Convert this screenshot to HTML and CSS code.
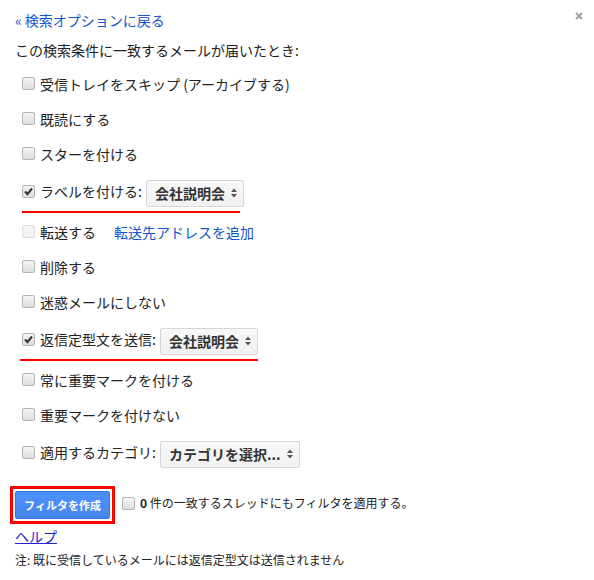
FILE: index.html
```html
<!DOCTYPE html>
<html lang="ja">
<head>
<meta charset="utf-8">
<title>フィルタ</title>
<link rel="stylesheet" href="styles.css">
</head>
<body>
<div class="dialog">
  <div class="head">
    <a class="back" href="#">« 検索オプションに戻る</a>
    <a class="close" href="#" aria-label="閉じる"><svg width="8" height="8" viewBox="0 0 8 8"><path d="M1 1L7 7M7 1L1 7" stroke="#a0a0a0" stroke-width="2"/></svg></a>
  </div>
  <div class="intro">この検索条件に一致するメールが届いたとき:</div>
  <div class="opts">
    <div class="row"><span class="cb"></span><span class="lbl">受信トレイをスキップ (アーカイブする)</span></div>
    <div class="row"><span class="cb"></span><span class="lbl">既読にする</span></div>
    <div class="row"><span class="cb"></span><span class="lbl">スターを付ける</span></div>
    <div class="row-sel">
      <div class="line"><span class="cb on"><svg width="11" height="11" viewBox="0 0 11 11"><path d="M2 5.5L4.5 8L9 2.5" fill="none" stroke="#3a3a3a" stroke-width="2.2"/></svg></span><span class="lbl">ラベルを付ける:</span><span class="sel">会社説明会<svg class="arr" width="6" height="10" viewBox="0 0 6 10"><path d="M0 4L3 0.5L6 4Z M0 6L3 9.5L6 6Z" fill="#555"/></svg></span></div>
      <div class="mark mark-label"></div>
    </div>
    <div class="row"><span class="cb off"></span><span class="lbl">転送する</span><a class="fwd" href="#">転送先アドレスを追加</a></div>
    <div class="row"><span class="cb"></span><span class="lbl">削除する</span></div>
    <div class="row"><span class="cb"></span><span class="lbl">迷惑メールにしない</span></div>
    <div class="row-sel">
      <div class="line"><span class="cb on"><svg width="11" height="11" viewBox="0 0 11 11"><path d="M2 5.5L4.5 8L9 2.5" fill="none" stroke="#3a3a3a" stroke-width="2.2"/></svg></span><span class="lbl">返信定型文を送信:</span><span class="sel">会社説明会<svg class="arr" width="6" height="10" viewBox="0 0 6 10"><path d="M0 4L3 0.5L6 4Z M0 6L3 9.5L6 6Z" fill="#555"/></svg></span></div>
      <div class="mark mark-reply"></div>
    </div>
    <div class="row"><span class="cb"></span><span class="lbl">常に重要マークを付ける</span></div>
    <div class="row"><span class="cb"></span><span class="lbl">重要マークを付けない</span></div>
    <div class="row-sel">
      <div class="line"><span class="cb"></span><span class="lbl">適用するカテゴリ:</span><span class="sel">カテゴリを選択...<svg class="arr" width="6" height="10" viewBox="0 0 6 10"><path d="M0 4L3 0.5L6 4Z M0 6L3 9.5L6 6Z" fill="#555"/></svg></span></div>
    </div>
  </div>
  <div class="actions">
    <div class="hl"><button class="create" type="button">フィルタを作成</button></div>
    <span class="cb"></span>
    <span class="apply"><b>0</b> 件の一致するスレッドにもフィルタを適用する。</span>
  </div>
  <a class="help" href="#">ヘルプ</a>
  <div class="note">注: 既に受信しているメールには返信定型文は送信されません</div>
</div>
</body>
</html>
```
FILE: styles.css
```css
html, body {
  margin: 0;
  padding: 0;
  background: #fff;
}
body {
  font-family: "Noto Sans CJK JP", "Noto Sans", sans-serif;
  font-size: 14px;
  color: #222;
}
.dialog {
  padding: 10px 11px 0 15px;
}
.head {
  display: flex;
  justify-content: space-between;
  align-items: flex-start;
  height: 20px;
}
.back {
  color: #1155cc;
  text-decoration: none;
  line-height: 20px;
}
.close {
  display: flex;
  margin-top: 2px;
}
.intro {
  margin-top: 10px;
  line-height: 20px;
  height: 20px;
}
.opts {
  margin-top: 6px;
}
.row {
  display: flex;
  align-items: center;
  height: 35px;
  padding-left: 7px;
}
.row-sel {
  height: 43px;
}
.line {
  display: flex;
  align-items: center;
  height: 40px;
  padding-top: 4px;
  padding-left: 7px;
  box-sizing: border-box;
}
.line .cb, .line .lbl {
  margin-bottom: 4px;
}
.cb {
  display: inline-flex;
  align-items: center;
  justify-content: center;
  flex: none;
  width: 11px;
  height: 11px;
  border: 1px solid #b4b4b4;
  border-radius: 2px;
  background: linear-gradient(#f4f4f4, #dedede);
}
.cb.off {
  border-color: #dcdcdc;
  background: #f3f3f3;
}
.lbl {
  margin-left: 5px;
  line-height: 20px;
  white-space: nowrap;
}
.fwd {
  margin-left: 18px;
  color: #1155cc;
  text-decoration: none;
  line-height: 20px;
}
.sel {
  display: inline-flex;
  align-items: center;
  margin-left: 4px;
  height: 27px;
  padding: 0 6px 0 8px;
  box-sizing: border-box;
  border: 1px solid #d6d6d6;
  border-radius: 2px;
  background: linear-gradient(#f8f8f8, #f1f1f1);
  font-weight: bold;
  color: #333;
  white-space: nowrap;
}
.arr {
  margin-left: 6px;
}
.mark {
  height: 2px;
  background: #f00;
}
.mark-label {
  margin-left: 7px;
  width: 218px;
}
.mark-reply {
  margin-left: 5px;
  width: 238px;
}
.actions {
  display: flex;
  align-items: center;
  margin-top: 11px;
}
.hl {
  display: flex;
  margin-left: -5px;
  padding: 2px;
  border: 3px solid #f00;
}
.create {
  width: 95px;
  height: 28px;
  margin: 0;
  padding: 0;
  border: 1px solid #3079ed;
  border-radius: 2px;
  background: linear-gradient(#4d90fe, #4787ed);
  color: #fff;
  font-family: "Noto Sans CJK JP", "Noto Sans", sans-serif;
  font-size: 11px;
  font-weight: bold;
}
.actions .cb {
  margin-left: 7px;
  margin-bottom: 4px;
}
.apply {
  margin-left: 5px;
  margin-bottom: 4px;
  font-size: 12px;
  line-height: 18px;
}
.help {
  display: inline-block;
  margin-top: 2px;
  line-height: 20px;
  color: #2323d6;
  text-decoration: underline;
}
.note {
  margin-top: 5px;
  font-size: 12px;
  line-height: 18px;
}
```
